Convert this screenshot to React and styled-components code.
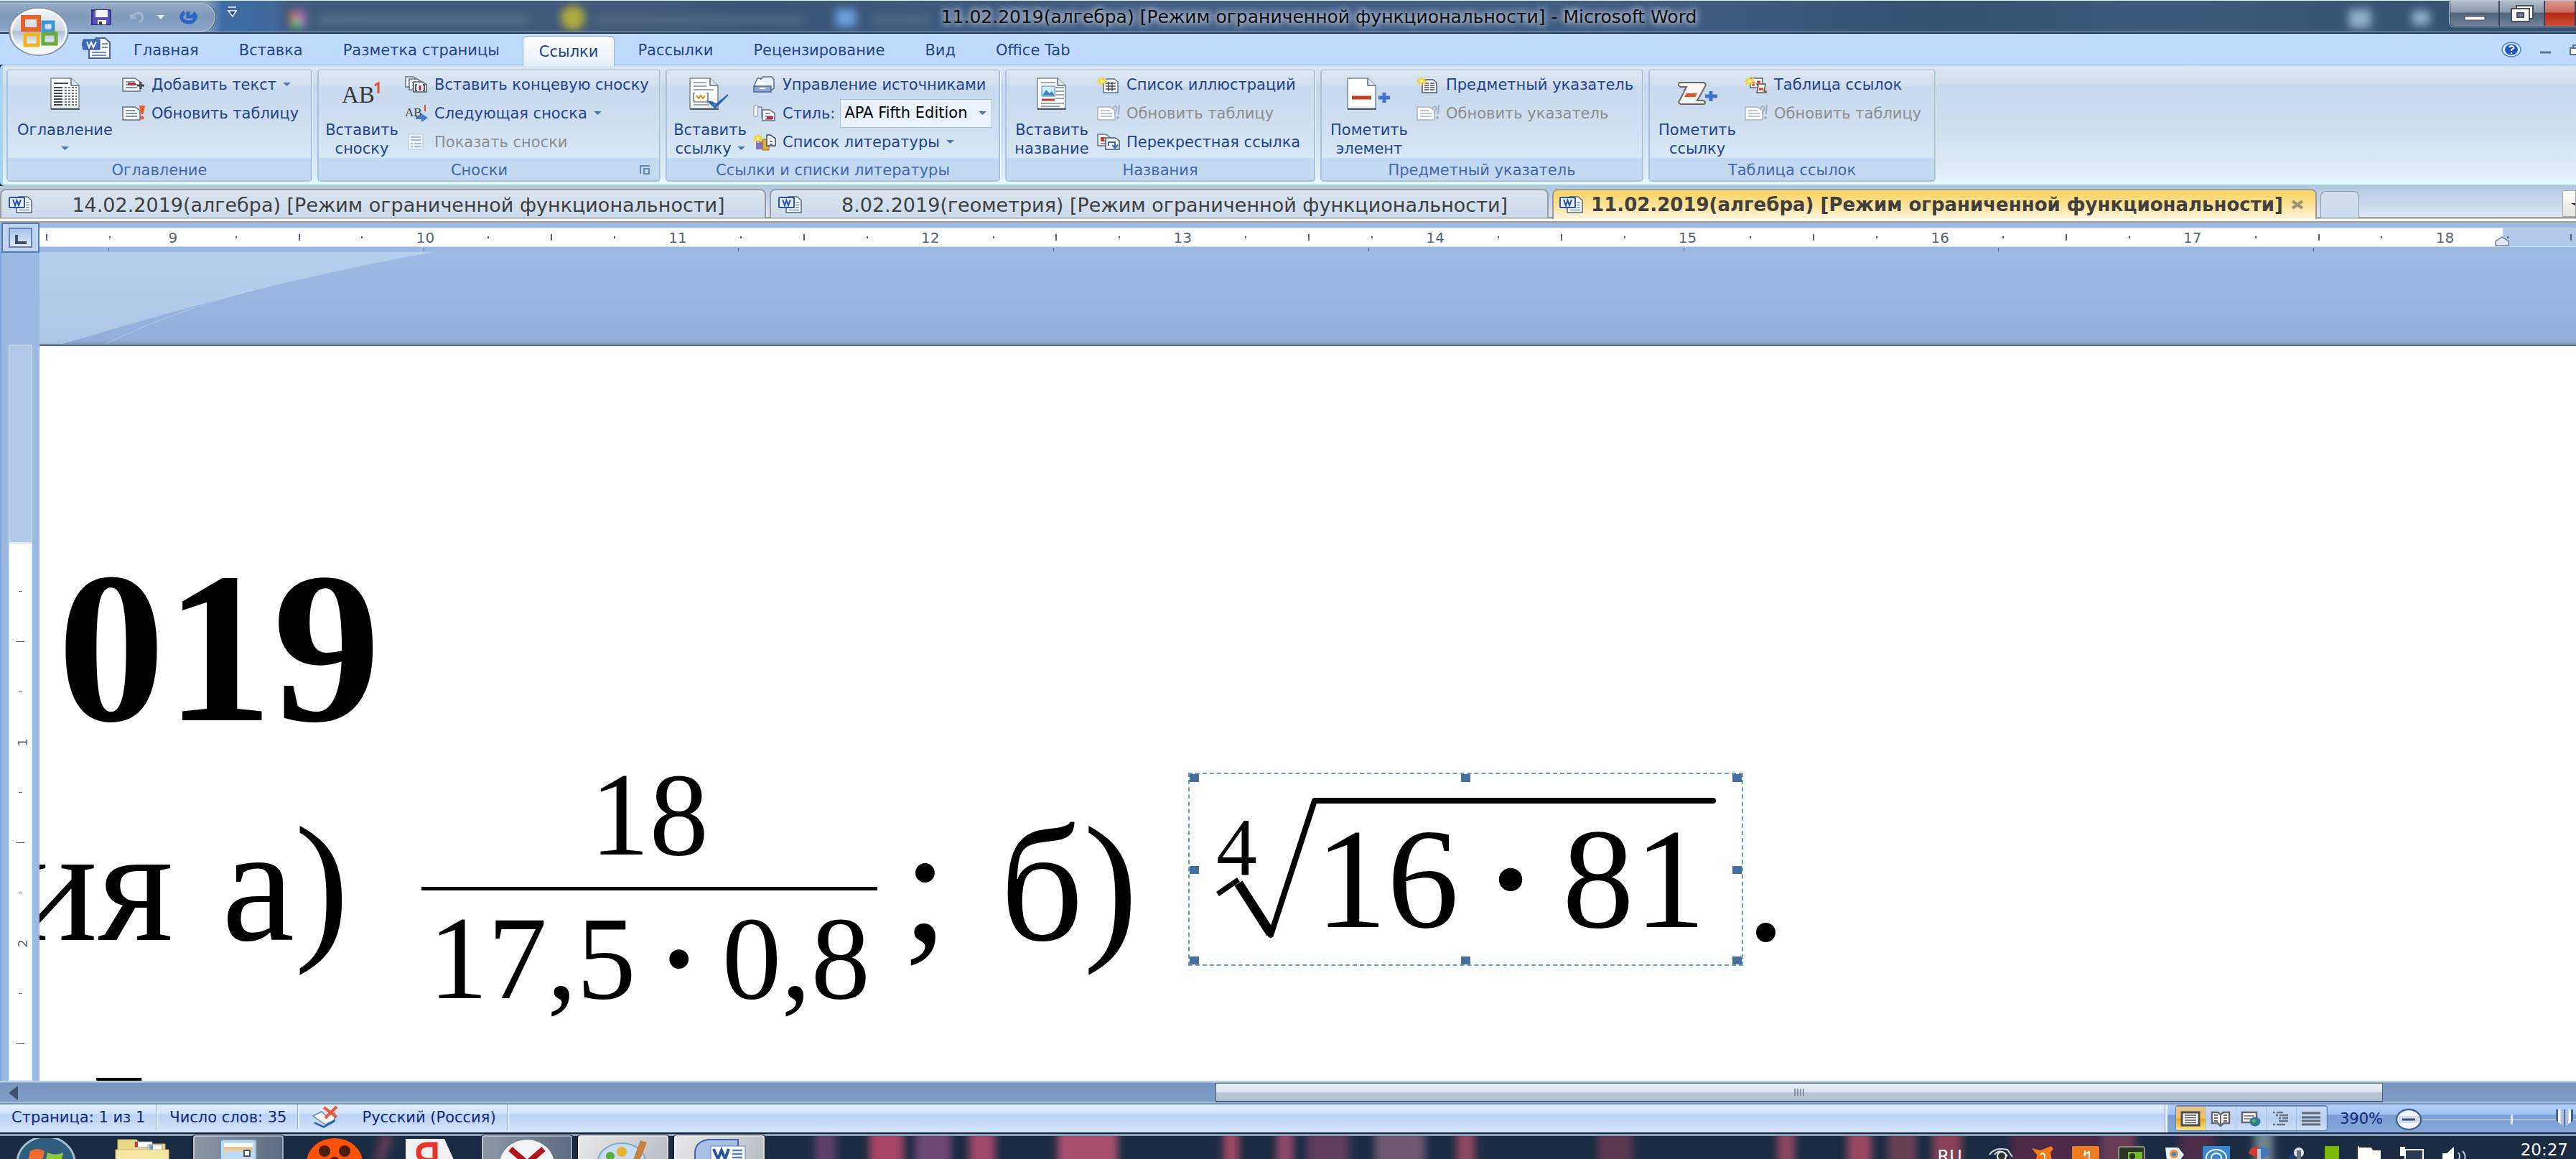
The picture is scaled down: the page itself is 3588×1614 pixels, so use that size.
import React from "react";
import styled, { createGlobalStyle, css } from "styled-components";

const ui = `"DejaVu Sans", "Noto Sans", sans-serif`;
const serif = `"Liberation Serif", serif`;

const Global = createGlobalStyle`
  * { box-sizing: border-box; }
  body { margin: 0; background: #1b2b42; font-family: ${ui}; }
  button, select, input { font: inherit; color: inherit; }
  button { border: 0; padding: 0; background: none; white-space: nowrap; }
  svg { display: block; flex: none; }
`;

const Shell = styled.div`
  height: 100vh;
  display: flex;
  flex-direction: column;
  overflow: hidden;
  position: relative;
`;

/* ---------- title bar ---------- */
const TitleBar = styled.header`
  height: 47px;
  flex: none;
  display: flex;
  position: relative;
  border-top: 1px solid #dff2f4;
  border-bottom: 2px solid #1d3150;
  box-shadow: inset 0 -1px 0 #9db4d0;
  background: linear-gradient(90deg, #7f9cbd 0, #7d9abb 290px, #3d6da6 310px, #41699c 380px, #405a7c 400px, #42597a 900px, #3a5578 1050px, #435f86 1700px, #3f5b80 2400px, #355273 2700px, #3f5a7c 3000px, #34506f 100%);
`;
const QuickAccess = styled.div`
  width: 300px;
  height: 40px;
  margin-top: 3px;
  padding-left: 127px;
  display: flex;
  align-items: center;
  border: 1px solid #b4c6db;
  border-left: 0;
  border-radius: 0 20px 20px 0;
  background: linear-gradient(#93a9c4, #7f9abb 50%, #8ba6c8);
  box-shadow: 1px 0 0 #40566f;
`;
const Quick = styled.button`
  width: ${(p) => p.$w}px;
  height: 32px;
  display: flex;
  align-items: center;
`;
const Ghosts = styled.div`
  position: absolute;
  inset: 0;
  pointer-events: none;
`;
const WindowTitle = styled.h1`
  margin: 0;
  position: absolute;
  inset: 0;
  left: 86px;
  text-align: center;
  font-size: 25px;
  line-height: 46px;
  font-weight: 400;
  color: #0b0f16;
  text-shadow: 0 0 8px #ffffffb0, 0 0 10px #ffffff90, 0 0 14px #ffffff80;
`;
const WindowButtons = styled.div`
  display: flex;
  position: relative;
  margin-left: auto;
  height: 36px;
  border: 1px solid #26394f;
  border-top: 0;
  border-right: 0;
  border-radius: 0 0 0 6px;
  box-shadow: 0 0 0 1px #b8c6d6;
  overflow: hidden;
`;
const WinButton = styled.button`
  width: ${(p) => p.$w}px;
  display: flex;
  align-items: center;
  justify-content: center;
  border-right: 2px solid #33465d;
  background: ${(p) =>
    p.$close
      ? "linear-gradient(#dc9a90, #cc6a5c 45%, #b52a17 50%, #cf4a33)"
      : "linear-gradient(#b5c0cd, #8896a8 45%, #52647b 50%, #70839b)"};
`;
const Orb = styled.button`
  position: absolute;
  left: 11px;
  top: 9px;
  width: 86px;
  height: 70px;
  z-index: 2;
`;

/* ---------- ribbon ---------- */
const TabStrip = styled.nav`
  height: 43px;
  flex: none;
  display: flex;
  align-items: stretch;
  background: #bfdbff;
  padding: 3px 0 0 112px;
  font-size: 21px;
  color: #1f448e;
`;
const TabIcon = styled.span`
  width: 46px;
  padding-top: 2px;
`;
const RibbonTab = styled.button`
  padding: 0 28px;
  line-height: 40px;
  ${(p) =>
    p.$active &&
    css`
      background: linear-gradient(#fdfeff, #e6eff9);
      border: 1px solid #8cb0dc;
      border-bottom: 0;
      border-radius: 6px 6px 0 0;
      position: relative;
      margin: 0 4px -2px;
      padding: 0 22px;
    `}
`;
const StripTools = styled.div`
  margin-left: auto;
  display: flex;
  align-items: center;
  gap: 26px;
  padding-bottom: 2px;
`;
const Ribbon = styled.section`
  height: 169px;
  flex: none;
  display: flex;
  gap: 7px;
  padding: 5px 9px 4px 5px;
  border: 1px solid #8db2e3;
  border-left: 4px solid #a9d3f2;
  border-right: 0;
  border-bottom: 2px solid #9dd0e8;
  border-radius: 6px 0 0 6px;
  background: linear-gradient(#dbe6f3 0, #d2dfee 26px, #c8d8ed 27px, #d0dfee 90px, #dfedfa 150px, #e4fbff 100%);
`;
const Group = styled.div`
  width: ${(p) => p.$w}px;
  display: flex;
  flex-direction: column;
  border: 2px solid #a9c3de;
  border-top-color: #c3d0df;
  border-radius: 5px;
  box-shadow: 1px 1px 0 #f2f9ff;
  overflow: hidden;
  font-size: 21px;
  color: #1f448e;
`;
const GroupBody = styled.div`
  flex: 1;
  display: flex;
  background: linear-gradient(#dde7f3 0, #d2dfef 22px, #c8d8ed 23px, #cfdff0 70px, #d9e8f6 100%);
`;
const GroupTitle = styled.div`
  height: 31px;
  line-height: 30px;
  padding: 2px ${(p) => (p.$launch ? 12 : 0)}px 0 0;
  display: flex;
  align-items: center;
  background: #c2d9f1;
  color: #3e6aaa;
  span { flex: 1; text-align: center; }
`;
const Big = styled.button`
  width: ${(p) => p.$w}px;
  display: flex;
  flex-direction: column;
  align-items: center;
  padding-top: 10px;
  line-height: 26px;
  > svg:first-child { margin-bottom: 14px; }
`;
const BigLine = styled.span`
  height: 26px;
  display: flex;
  align-items: center;
  gap: 8px;
`;
const Rows = styled.div`
  display: flex;
  flex-direction: column;
`;
const Cmd = styled.button`
  height: 40px;
  display: flex;
  align-items: center;
  gap: 9px;
  color: ${(p) => (p.disabled ? "#8d8d8d" : "inherit")};
`;
const StyleRow = styled.div`
  height: 40px;
  display: flex;
  align-items: center;
  label { margin: 0 7px 0 9px; }
`;
const SelectWrap = styled.div`
  position: relative;
  svg { position: absolute; right: 8px; top: 17px; pointer-events: none; }
`;
const Select = styled.select`
  appearance: none;
  width: 212px;
  height: 40px;
  padding: 0 0 2px 5px;
  border: 1px solid #abc1de;
  border-radius: 0;
  background: #eaf2fb;
  color: #000;
`;

/* ---------- document tabs ---------- */
const DocTabs = styled.div`
  height: 51px;
  flex: none;
  display: flex;
  align-items: flex-end;
  padding-bottom: 5px;
  gap: 5px;
  border-bottom: 2px solid #a2a090;
  background: linear-gradient(#b3c7e2, #dde6f4 43px, #9c9d9b 43px, #9c9d9b 45px, #fff 46px);
`;
const DocTab = styled.button`
  width: ${(p) => p.$w}px;
  height: 40px;
  display: flex;
  align-items: center;
  padding: 2px 0 0 10px;
  font-size: ${(p) => (p.$active ? 26 : 27)}px;
  color: #3f3f3f;
  border: 2px solid #9a9c9c;
  border-bottom: 0;
  border-radius: 8px 8px 0 0;
  background: linear-gradient(#dce5ef, #ccdaec);
  > span { flex: 1; text-align: center; }
  ${(p) =>
    p.$active &&
    css`
      height: 42px;
      margin-bottom: -2px;
      padding: 0 16px 0 8px;
      font-weight: 700;
      background: linear-gradient(#fcd463, #fde39a 55%, #fff6df);
    `}
`;
const NewTab = styled.button`
  width: 54px;
  height: 37px;
  border: 1px solid #8c97a5;
  border-bottom: 0;
  border-radius: 8px 8px 0 0;
  background: linear-gradient(#d3deec, #cbdcec);
`;
const TabMenu = styled.button`
  margin-left: auto;
  align-self: flex-start;
  margin-top: 6px;
  width: 19px;
  height: 37px;
  border: 1px solid #a9a9a9;
  background: linear-gradient(#fff, #e3e3e0);
  display: flex;
  align-items: center;
  justify-content: flex-end;
`;

/* ---------- rulers ---------- */
const RulerRow = styled.div`
  height: 41px;
  flex: none;
  display: flex;
  background: #9bb9e1;
`;
const Corner = styled.button`
  width: 53px;
  margin-left: 2px;
  height: 42px;
  padding: 5px 8px 7px;
  border: 2px solid #4f7ac0;
  background: #c1d5f0;
  flex: none;
  position: relative;
`;
const CornerFace = styled.span`
  display: flex;
  justify-content: center;
  align-items: flex-end;
  height: 28px;
  padding-bottom: 3px;
  border: 2px solid #6284bb;
  background: linear-gradient(#a8c2e8, #e2ecf8);
`;
const RulerBody = styled.div`
  flex: 1;
  min-width: 0;
  overflow: hidden;
  padding-top: 8px;
`;
const Scale = styled.div`
  height: 25px;
  display: flex;
  position: relative;
  background: linear-gradient(90deg, #fff calc(100% - 102px), #b1c8ea calc(100% - 102px));
  box-shadow: 0 -1px 0 #cfdff3, 0 1px 0 #cfdff3;
`;
const Ticks = styled.div`
  flex: 1;
  display: flex;
  margin: 0 -37px 0 -34px;
`;
const Tick = styled.span`
  flex: 1 1 0;
  display: flex;
  align-items: center;
  justify-content: center;
  font-size: 20px;
  line-height: 24px;
  color: #59636f;
  &::before {
    content: "";
    width: ${(p) => (p.$kind === "num" ? 0 : 2)}px;
    height: ${(p) => (p.$kind === "half" ? 9 : 3)}px;
    background: #59636f;
  }
`;
const Indent = styled.span`
  position: absolute;
  right: 92px;
  bottom: 0;
`;
const Stops = styled.div`
  display: flex;
  height: 8px;
  padding: 2px 146px 2px 0;
  margin-left: -123px;
  i { flex: 1; display: flex; justify-content: center; }
  i::before { content: ""; width: 1px; height: 5px; background: #53657e; }
`;
const Work = styled.main`
  flex: 1;
  min-height: 0;
  display: flex;
  background: #9bb9e1;
`;
const SideRuler = styled.div`
  width: 55px;
  flex: none;
  padding: 129px 10px 0;
  display: flex;
  flex-direction: column;
  border-left: 2px solid #7da3d8;
`;
const SideMargin = styled.div`
  height: 276px;
  flex: none;
  border: 1px solid #dbe7f6;
  background: #b1c8ea;
`;
const SideScale = styled.div`
  flex: 1;
  display: flex;
  flex-direction: column;
  padding: 31px 0 15px;
  background: #fff;
  border: 1px solid #dbe7f6;
`;
const SideTick = styled.span`
  flex: 1;
  display: flex;
  align-items: center;
  justify-content: center;
  font-size: 18px;
  color: #59636f;
  &::before {
    content: "";
    height: ${(p) => (p.$kind === "num" ? 0 : 1)}px;
    width: ${(p) => (p.$kind === "half" ? 11 : 5)}px;
    background: #59636f;
  }
  b { font-weight: 400; writing-mode: vertical-rl; transform: rotate(180deg); }
`;

/* ---------- document ---------- */
const Desk = styled.div`
  flex: 1;
  min-width: 0;
  display: flex;
  flex-direction: column;
`;
const Backdrop = styled.div`
  height: 129px;
  flex: none;
  background: linear-gradient(#9dbce5, #91aedb 95%, #7f97bb);
`;
const Page = styled.article`
  flex: 1;
  min-height: 0;
  overflow: hidden;
  border-top: 2px solid #5f6a78;
  padding-top: 290px;
  background: #fff;
  color: #000;
  font-family: ${serif};
  white-space: nowrap;
`;
const DateLine = styled.h2`
  margin: 0;
  padding-left: 25px;
  font-size: 300px;
  line-height: 260px;
  font-weight: 700;
`;
const Line = styled.div`
  margin-top: 8px;
  display: grid;
  grid-template-columns: 254px 278px 635px 171px 262px 776px auto;
  align-items: start;
  height: 418px;
`;
const Run = styled.span`
  margin-top: 78px;
  font-size: 228px;
  line-height: 228px;
  display: flex;
  justify-content: ${(p) => (p.$end ? "flex-end" : "flex-start")};
  padding-right: ${(p) => (p.$end ? 68 : 0)}px;
  padding-left: ${(p) => p.$indent || 0}px;
`;
const Fraction = styled.div`
  font-size: 165px;
  line-height: 190px;
`;
const Part = styled.div`
  display: flex;
  justify-content: center;
`;
const Bar = styled.div`
  height: 5px;
  margin-top: 5px;
  background: #000;
`;
const Times = styled.b`
  width: ${(p) => p.$w}px;
  text-align: center;
`;
const Radical = styled.div`
  position: relative;
  margin-top: 36px;
  width: 773px;
  height: 269px;
  padding: 46px 0 0 37px;
  border: 2px dashed #6f9bc4;
  display: flex;
  font-size: 200px;
  line-height: 200px;
`;
const Degree = styled.span`
  width: 138px;
  font-size: 114px;
  line-height: 114px;
`;
const RootSign = styled.svg`
  position: absolute;
  inset: 0;
`;
const Handle = styled.span`
  position: absolute;
  width: 13px;
  height: 11px;
  background: #456f9e;
  left: ${(p) => ["0", "calc(50% - 7px)", "calc(100% - 13px)"][p.$x]};
  top: ${(p) => ["0", "calc(50% - 5px)", "calc(100% - 11px)"][p.$y]};
`;
const NextLine = styled.p`
  margin: 0;
  padding-left: 64px;
  font-size: 190px;
  line-height: 208px;
`;

/* ---------- bottom bars ---------- */
const HScroll = styled.div`
  height: 33px;
  flex: none;
  display: flex;
  align-items: center;
  padding: 0 269px 0 12px;
  background: linear-gradient(#b5cfe8 0, #b5cfe8 2px, #7896c0 3px, #7f9dc6 29px, #bcd3ee 30px, #4a6794 33px);
`;
const Thumb = styled.div`
  margin-left: auto;
  width: 1626px;
  height: 27px;
  display: flex;
  align-items: center;
  justify-content: center;
  gap: 2px;
  border: 1px solid #4c5f83;
  border-bottom-width: 2px;
  background: linear-gradient(#eaeff5, #dde4ed 50%, #bdc9da 52%, #b0bed1);
  i { width: 2px; height: 10px; background: #8592a6; }
`;
const Status = styled.footer`
  height: 41px;
  flex: none;
  display: flex;
  font-size: 21px;
  line-height: 41px;
  color: #15287a;
  border-bottom: 2px solid #14233b;
  background: linear-gradient(#e2f0ff 0, #cfe1fb 13px, #b9d2f6 14px, #c9dcf9 28px, #d8e8ff 100%);
`;
const Stat = styled.button`
  padding: 0 16px;
  border-right: 2px solid #e9f4ff;
  box-shadow: inset -1px 0 0 #8fb0dd;
  height: 35px;
  line-height: 38px;
  display: flex;
  align-items: center;
  gap: 29px;
`;
const ViewArea = styled.div`
  margin-left: auto;
  display: flex;
  padding-left: 11px;
  border-left: 3px solid #eaf4ff;
  box-shadow: -1px 0 0 #7d9fce;
  background: linear-gradient(#b4d2ff 0, #9fc2f3 14px, #7a9fd6 15px, #86a8d8 100%);
`;
const Views = styled.div`
  display: flex;
  height: 36px;
  margin-top: 1px;
  border: 1px solid #5e84bb;
  border-top-width: 2px;
  border-radius: 4px;
  overflow: hidden;
  background: linear-gradient(#c7dcf8, #b7cff2 50%, #cfe0f8);
`;
const View = styled.button`
  width: 42px;
  display: flex;
  align-items: center;
  justify-content: center;
  border-right: 1px solid #a3c0e6;
  background: ${(p) => (p.$on ? "linear-gradient(#e6bf8c, #f4c160 48%, #e9a820 52%, #fbe38e)" : "none")};
`;
const ZoomValue = styled.button`
  padding: 0 17px;
`;
const ZoomOut = styled.button`
  width: 38px;
`;
const Slider = styled.input`
  appearance: none;
  width: 214px;
  height: 38px;
  margin: 0;
  background:
    linear-gradient(#dceaff, #dceaff) 0 21px / 100% 1px no-repeat,
    linear-gradient(#dceaff, #dceaff) 123px 14px / 3px 14px no-repeat;
  &::-webkit-slider-thumb {
    appearance: none;
    width: 24px;
    height: 25px;
    clip-path: polygon(0 0, 100% 0, 100% 62%, 50% 100%, 0 62%);
    background: linear-gradient(90deg, #3f5f90 3px, #fff 3px, #fff 6px, #a9bfdf 7px, #a9bfdf 11px, #54719d 11px, #54719d 13px, #a9bfdf 13px, #a9bfdf 17px, #fff 18px, #fff 21px, #3f5f90 21px);
  }
`;
const Taskbar = styled.div`
  height: 35px;
  flex: none;
  position: relative;
  display: flex;
  overflow: hidden;
  background: #1b2b42;
`;
const Wallpaper = styled.svg`
  position: absolute;
  inset: 0;
`;
const TaskButton = styled.button`
  position: relative;
  height: 50px;
  width: 128px;
  margin-top: 1px;
  display: flex;
  justify-content: center;
  padding-top: 5px;
  ${(p) =>
    p.$open &&
    css`
      border: 1px solid #0d1826;
      box-shadow: inset 0 0 0 2px #ffffff70;
      border-radius: 4px;
      background: ${p.$light ? "linear-gradient(120deg, #e9e9ea, #b6bac2)" : "linear-gradient(90deg, #8d98a6, #5c6b7f)"};
    `}
`;
const Launcher = styled.div`
  position: relative;
  display: flex;
  gap: 6px;
`;
const Tray = styled.div`
  position: relative;
  margin-left: auto;
  display: flex;
  gap: 26px;
  padding-right: 11px;
  color: #fff;
  > svg { margin-top: 17px; }
`;
const Lang = styled.button`
  font-size: 24px;
  line-height: 28px;
  height: 46px;
  padding-top: 17px;
  margin-right: 11px;
`;
const Clock = styled.time`
  font-size: 23px;
  line-height: 24px;
  padding-top: 10px;
  margin-left: 49px;
`;

/* ---------- drawings ---------- */
const Arrow = () => (
  <svg width="11" height="6" viewBox="0 0 11 6"><path d="M0 0h11L5.500 5z" fill="#4f74aa" /></svg>
);
const Svg = ({ w, h, children }) => (
  <svg width={w} height={h} viewBox={`0 0 ${w} ${h}`} aria-hidden="true">{children}</svg>
);
const WordDoc = () => (
  <Svg w={33} h={24}>
    <path d="M14 1h12l6 5v17H11V8z" fill="#fff" stroke="#4a648f" strokeWidth="1.500" />
    <path d="M15 19.500h14M24 9h5M24 12.500h5M24 16h5" stroke="#6e8fc8" strokeWidth="1.500" />
    <rect x="1" y="2" width="21" height="14" rx="1" fill="#e8effb" stroke="#2c57a4" strokeWidth="2" />
    <path d="M6 5l3 8 2.500-7 2.500 7 3-8" fill="none" stroke="#24509f" strokeWidth="2" />
  </Svg>
);
const Sheet = ({ x = 0, y = 0, w = 26, h = 20, tint = "#5b6f8a" }) => (
  <g>
    <path d={`M${x + 1} ${y + 1}h${w - 9}l7 5v${h - 7}h${-(w - 2)}z`} fill="#fff" stroke={tint} strokeWidth="1.500" />
    <path d={`M${x + 5} ${y + 6}h${w - 13}M${x + 5} ${y + 10}h${w - 10}M${x + 5} ${y + 14}h${w - 10}`} stroke={tint} strokeWidth="1.500" />
  </g>
);
const Star = ({ x = 7, y = 7 }) => (
  <g stroke="#f3d648" strokeWidth="2.500">
    <path d={`M${x - 7} ${y}h14M${x} ${y - 6}v12M${x - 5} ${y - 4}l10 8M${x + 5} ${y - 4}l-10 8`} />
    <circle cx={x} cy={y} r="2" fill="#fff6b0" stroke="none" />
  </g>
);
const BigSheet = ({ children }) => (
  <g>
    <path d="M1 1h28l11 10v32H1z" fill="#fff" stroke="#7a8797" strokeWidth="1.500" />
    <path d="M29 1v10h11" fill="#dfe8f2" stroke="#5b6878" strokeWidth="1.500" />
    <path d="M1 44h40" stroke="#56616f" strokeWidth="2" />
    {children}
  </g>
);

const small = {
  addText: <><Sheet y={2} /><path d="M8 11h11" stroke="#c8202c" strokeWidth="3" /><path d="M21 13h10M26 8v10" stroke="#444c58" strokeWidth="3" /></>,
  update: <><Sheet y={2} /><path d="M24 1l8 0-2.500 12h-3z" fill="#f05a28" /><circle cx="28" cy="18" r="2.500" fill="#f05a28" /></>,
  updateOff: <><Sheet y={2} tint="#a9b3c4" /><path d="M22 5q4-6 6 0l-4 7" stroke="#a9b3c4" fill="none" strokeWidth="2" /><path d="M30 0l2 0-1 13h-2z" fill="#a3aec0" /><circle cx="29" cy="18" r="2" fill="#a3aec0" /></>,
  endnote: <><Sheet w={20} h={16} /><Sheet x={5} y={3} w={20} h={17} /><path d="M12 8h12l6 4v10H12z" fill="#fff" stroke="#4d5a6b" strokeWidth="1.500" /><path d="M17 12h-2v8h2M25 12h2v8h-2" stroke="#222" fill="none" strokeWidth="1.500" /><path d="M21 13v7" stroke="#c01f30" strokeWidth="3" /></>,
  next: <><text x="0" y="16" fontFamily="Liberation Serif" fontSize="17" fill="#333">AB</text><path d="M28 0v9" stroke="#e2502e" strokeWidth="2" /><path d="M15 16h8v-4l9 6-9 6v-4h-8z" fill="#3c78cf" /></>,
  show: <><rect x="5" y="1" width="20" height="21" fill="#eef4fb" stroke="#b5c2d6" /><path d="M8 5h14M8 9h14M8 14h3M13 14h10M8 18h3M13 18h10" stroke="#8fa6ca" strokeWidth="1.500" /></>,
  sources: <><path d="M2 12L6 3h12v14H2z" fill="#fff" stroke="#5c6e8c" strokeWidth="1.500" /><path d="M10 5l4-4h12l3 4v12l-6 4" fill="#eef3fa" stroke="#5c6e8c" strokeWidth="1.500" /><path d="M1 14h24v8H1z" fill="#8ea9d6" stroke="#4d6798" strokeWidth="1.500" /><path d="M9 17h8" stroke="#fff" strokeWidth="2" /></>,
  style: <><path d="M1 1h5v15H1z" fill="#fff" stroke="#8b93a8" /><path d="M7 3h5v15l12 2" fill="#e8ebf3" stroke="#7c86a0" strokeWidth="1.500" /><Sheet x={12} y={6} w={19} h={17} /><path d="M19 16h9v4h-9z" fill="#c3313b" /></>,
  biblio: <><path d="M4 10h9v12H4z" fill="#8273c4" /><path d="M13 8h9v15h-9z" fill="#e0b13a" stroke="#8c6b17" /><Sheet x={18} y={1} w={14} h={17} tint="#3d4a5c" /><Star /></>,
  figures: <><path d="M9 4h15l5 4v15H9z" fill="#fff" stroke="#5b6f8a" strokeWidth="1.500" /><path d="M12 10h14M12 14h14M12 18h14M16 8v13M21 8v13" stroke="#3f4a5a" strokeWidth="1.500" /><Star /></>,
  cross: <><Sheet w={20} h={18} /><path d="M5 5h5v6H5z" fill="#d03a2a" /><path d="M12 6h13l6 4v12H12z" fill="#fff" stroke="#3f5475" strokeWidth="1.500" /><path d="M16 17v-5h9v7M21 16l4 4 4-4" stroke="#2f64c0" strokeWidth="2" fill="none" /></>,
  index: <><path d="M8 5h15l5 4v14H8z" fill="#fff" stroke="#46536a" strokeWidth="1.500" /><path d="M11 10h6M19 10h6M11 13h6M19 13h6M11 16h6M19 16h6M11 19h6M19 19h6" stroke="#3f4a5a" strokeWidth="1.500" /><Star /></>,
  authorities: <><path d="M8 3h17v13H8z" fill="#fff" stroke="#5d5d68" strokeWidth="1.500" /><path d="M10 8h4M17 8h5M10 12h4M17 12h5" stroke="#c33a30" strokeWidth="3" /><path d="M17 11h12l-2 10h3v2H17l2-9z" fill="#f4f1ec" stroke="#5b5550" strokeWidth="1.500" /><path d="M20 18h6" stroke="#c8472c" strokeWidth="3" /><Star /></>,
};
const Small = ({ name }) => <Svg w={32} h={24}>{small[name]}</Svg>;

const big = {
  toc: <BigSheet><path d="M5 8h20M5 14h12M5 18h12M5 22h12M5 26h12M5 30h12M5 34h12M5 38h12" stroke="#3c4653" strokeWidth="2" /><path d="M20 14h17M20 18h17M20 22h17M20 26h17M20 30h17M20 34h17M20 38h17" stroke="#6a7582" strokeWidth="2" strokeDasharray="3 2" /></BigSheet>,
  footnote: <><text x="0" y="35" fontFamily="Liberation Serif" fontSize="33" fill="#3a3a3a">AB</text><path d="M46 11l5-3v14" stroke="#e8512e" strokeWidth="3" fill="none" /></>,
  citation: <BigSheet><path d="M6 7h18M6 12h18M6 17h28M6 34h28M6 38h22" stroke="#9aa7b8" strokeWidth="2" /><path d="M8 22h-2v10h2M24 22h2v10h-2" stroke="#8b95a3" fill="none" strokeWidth="2" /><path d="M10 25l3 4 3-4 3 4 3-4" stroke="#e08a2a" fill="none" strokeWidth="2" /><path d="M26 33l10 9L54 24 38 37z" fill="#3b7fd6" stroke="#2a66b8" strokeWidth="2" /></BigSheet>,
  caption: <BigSheet><path d="M6 7h20M26 14h12M26 19h12M26 24h12M6 36h32M6 40h26M26 29h12" stroke="#9aa7b8" strokeWidth="2" /><rect x="7" y="12" width="18" height="14" fill="#cde9f8" stroke="#4a90c0" /><path d="M8 25l5-8 5 5 3-3 4 6z" fill="#3d86b9" /><path d="M7 31h18" stroke="#c23a2b" strokeWidth="3" /></BigSheet>,
  entry: <BigSheet><path d="M7 28h27" stroke="#c1441f" strokeWidth="5" /><path d="M44 28h16M52 21v14" stroke="#3e74cf" strokeWidth="5" /></BigSheet>,
  authority: <><path d="M4 7h34q5 2 1 7l-10 18h8q5 1 2 5H6q-5-2-1-6L14 13H6q-5-2-2-6z" fill="#f7f5f1" stroke="#6c6963" strokeWidth="2" /><path d="M14 22h15l-3 5H11z" fill="#d25a2c" /><path d="M40 26h17M48 19v14" stroke="#3e74cf" strokeWidth="5" /></>,
};
const bigW = { toc: 42, footnote: 56, citation: 58, caption: 42, entry: 62, authority: 58 };

const groups = [
  { title: "Оглавление", w: 426, bigW: 159, icon: "toc", lines: ["Оглавление", ""], drop: true, cmds: [["addText", "Добавить текст", 1], ["update", "Обновить таблицу"]] },
  { title: "Сноски", w: 478, bigW: 120, icon: "footnote", lines: ["Вставить", "сноску"], launch: true, cmds: [["endnote", "Вставить концевую сноску"], ["next", "Следующая сноска", 1], ["show", "Показать сноски", 0, 1]] },
  { title: "Ссылки и списки литературы", w: 466, bigW: 120, icon: "citation", lines: ["Вставить", "ссылку"], drop: true, cmds: [["sources", "Управление источниками"], ["style"], ["biblio", "Список литературы", 1]] },
  { title: "Названия", w: 432, bigW: 126, icon: "caption", lines: ["Вставить", "название"], cmds: [["figures", "Список иллюстраций"], ["updateOff", "Обновить таблицу", 0, 1], ["cross", "Перекрестная ссылка"]] },
  { title: "Предметный указатель", w: 450, bigW: 132, icon: "entry", lines: ["Пометить", "элемент"], cmds: [["index", "Предметный указатель"], ["updateOff", "Обновить указатель", 0, 1]] },
  { title: "Таблица ссылок", w: 400, bigW: 132, icon: "authority", lines: ["Пометить", "ссылку"], cmds: [["authorities", "Таблица ссылок"], ["updateOff", "Обновить таблицу", 0, 1]] },
];

const kinds = ["half", "dot", "num", "dot"];
const streaks = [
  [1150, 30, "#5d3f68"], [1235, 48, "#a84565"], [1300, 50, "#6d4a70"], [1368, 36, "#a04a68"], [1515, 84, "#a8506e"],
  [1715, 22, "#a34663"], [1790, 24, "#8f4866"], [1850, 60, "#5c3c5c"], [1950, 70, "#6f5872"], [2042, 26, "#8f4a60"],
  [2250, 50, "#5a3750"], [2488, 24, "#8f4560"], [2590, 34, "#984862"], [2650, 40, "#6b4154"], [2712, 40, "#8a4258"], [2860, 120, "#4d2b45"], [2950, 50, "#6b3a55"], [3060, 50, "#4b2d48"],
];

export default function App() {
  return (
    <Shell>
      <Global />
      <TitleBar>
        <Ghosts>
          <svg width="100%" height="44">
            <defs><filter id="soft" x="-50%" y="-50%" width="200%" height="200%"><feGaussianBlur stdDeviation="6" /></filter></defs>
            <g filter="url(#soft)">
              <rect x="404" y="14" width="10" height="22" fill="#d07050" /><rect x="414" y="14" width="12" height="22" fill="#b060c0" /><rect x="406" y="26" width="14" height="12" fill="#50c070" />
              <rect x="445" y="22" width="290" height="9" fill="#5d7491" />
              <circle cx="798" cy="24" r="17" fill="#b0ab3c" />
              <rect x="830" y="22" width="290" height="9" fill="#566d8a" />
              <rect x="1164" y="12" width="28" height="24" fill="#6aa0e0" />
              <rect x="1215" y="22" width="80" height="9" fill="#566d8a" />
              <rect x="3272" y="12" width="30" height="26" fill="#93aecb" /><rect x="3360" y="14" width="24" height="20" fill="#93aecb" />
            </g>
          </svg>
        </Ghosts>
        <QuickAccess>
          <Quick $w={52} aria-label="Сохранить"><Svg w={28} h={22}><path d="M1 1h26v20H1z" fill="#5a52b8" stroke="#38329a" strokeWidth="2" /><path d="M6 1h17v10H6z" fill="#f3f6fd" /><path d="M9 15h12v6H9z" fill="#fff" /><path d="M11 17h4v4h-4z" fill="#333" /></Svg></Quick>
          <Quick $w={39} aria-label="Отменить"><Svg w={24} h={18}><path d="M3 5l1 5h7M4 9q10-10 15-3 3 6-4 10" fill="none" stroke="#a3b4cb" strokeWidth="3" /></Svg></Quick>
          <Quick $w={32} aria-label="Список отмены"><Svg w={12} h={8}><path d="M1 1h10L6 7z" fill="#e8eef6" /></Svg></Quick>
          <Quick $w={30} aria-label="Повторить"><Svg w={26} h={20}><path d="M7 3C-2 10 5 17 13 17s13-8 6-13M12 2v7h8" fill="none" stroke="#2d66c6" strokeWidth="5" /></Svg></Quick>
        </QuickAccess>
        <Quick $w={46} aria-label="Настройка панели быстрого доступа"><Svg w={46} h={20}><path d="M18 3h11M18 8h11l-5 8z" fill="#1d4285" stroke="#fff" strokeWidth="1.500" /></Svg></Quick>
        <WindowTitle>11.02.2019(алгебра) [Режим ограниченной функциональности] - Microsoft Word</WindowTitle>
        <WindowButtons>
          <WinButton $w={69} aria-label="Свернуть"><Svg w={30} h={20}><path d="M1 14h28v5H1z" fill="#fff" stroke="#48505a" /></Svg></WinButton>
          <WinButton $w={63} aria-label="Восстановить"><Svg w={34} h={26}><path d="M9 2h23v18H9z" fill="#fff" stroke="#48505a" strokeWidth="2" /><path d="M2 6h25v18H2z" fill="#fff" stroke="#48505a" strokeWidth="2" /><path d="M10 12h9v6h-9z" fill="#6f7f93" stroke="#48505a" strokeWidth="2" /></Svg></WinButton>
          <WinButton $w={43} $close aria-label="Закрыть" />
        </WindowButtons>
      </TitleBar>
      <Orb aria-label="Кнопка Office">
        <Svg w={86} h={70}>
          <defs><linearGradient id="orb" x1="0" y1="0" x2="0" y2="1"><stop offset="0" stopColor="#f4f7fb" /><stop offset=".47" stopColor="#d2dae6" /><stop offset=".5" stopColor="#aebfd6" /><stop offset=".8" stopColor="#eff4fa" /><stop offset="1" stopColor="#fff" /></linearGradient></defs>
          <ellipse cx="43" cy="35" rx="41" ry="33" fill="url(#orb)" stroke="#8597b0" strokeWidth="2" />
          <ellipse cx="43" cy="35" rx="38" ry="31" fill="none" stroke="#fff" strokeWidth="2" />
          <g fill="none">
            <path d="M21 15h22v17H21z" stroke="#e8622a" strokeWidth="6" />
            <path d="M49 22h14v12H49z" stroke="#3f97cf" strokeWidth="5" />
            <path d="M24 39h18v15H24z" stroke="#f3b51f" strokeWidth="5" />
            <path d="M49 38h18v14H49z" stroke="#6aaa3e" strokeWidth="5" />
          </g>
        </Svg>
      </Orb>
      <TabStrip>
        <TabIcon>
          <Svg w={42} h={31}>
            <path d="M22 1h12l7 6v22H12V12z" fill="#f7faff" stroke="#4a648f" strokeWidth="2" />
            <path d="M30 9h8M30 14h8M16 21h20M16 25h20" stroke="#6e8fc8" strokeWidth="2" />
            <path d="M4 3h23v14H4q-3-8 0-14z" fill="#3c68bf" stroke="#24509f" />
            <path d="M9 6l3 8 3-7 3 7 4-8" fill="none" stroke="#fff" strokeWidth="2" />
          </Svg>
        </TabIcon>
        {["Главная", "Вставка", "Разметка страницы", "Ссылки", "Рассылки", "Рецензирование", "Вид", "Office Tab"].map((t) => (
          <RibbonTab key={t} $active={t === "Ссылки"}>{t}</RibbonTab>
        ))}
        <StripTools>
          <button aria-label="Справка"><Svg w={28} h={22}><ellipse cx="14" cy="11" rx="13" ry="10" fill="#d8e8fb" stroke="#4d86cf" strokeWidth="1.500" /><ellipse cx="14" cy="11" rx="9" ry="7.500" fill="#1f58c4" /><path d="M10.500 8q3.500-4 7 0 0 2-3.500 3v2M14 15v2" stroke="#fff" strokeWidth="2" fill="none" /></Svg></button>
          <button aria-label="Свернуть документ"><Svg w={15} h={16}><path d="M0 12h15" stroke="#5b7497" strokeWidth="3" /></Svg></button>
          <button aria-label="Восстановить документ"><Svg w={9} h={16}><path d="M1 6h12v9H1z" fill="#fff" stroke="#5b6f8c" strokeWidth="2" /><path d="M5 5V2h8" stroke="#5b6f8c" strokeWidth="2" fill="none" /></Svg></button>
        </StripTools>
      </TabStrip>
      <Ribbon>
        {groups.map((g) => (
          <Group key={g.title} $w={g.w}>
            <GroupBody>
              <Big $w={g.bigW}>
                <Svg w={bigW[g.icon]} h={46}>{big[g.icon]}</Svg>
                <BigLine>{g.lines[0]}</BigLine>
                <BigLine>{g.lines[1]}{g.drop && <Arrow />}</BigLine>
              </Big>
              <Rows>
                {g.cmds.map(([icon, label, drop, off]) =>
                  icon === "style" ? (
                    <StyleRow key={icon}>
                      <Small name="style" />
                      <label htmlFor="bib-style">Стиль:</label>
                      <SelectWrap>
                        <Select id="bib-style"><option>APA Fifth Edition</option></Select>
                        <Arrow />
                      </SelectWrap>
                    </StyleRow>
                  ) : (
                    <Cmd key={label} disabled={!!off}><Small name={icon} />{label}{!!drop && <Arrow />}</Cmd>
                  )
                )}
              </Rows>
            </GroupBody>
            <GroupTitle $launch={g.launch}>
              <span>{g.title}</span>
              {g.launch && <button aria-label="Параметры сносок"><Svg w={15} h={13}><path d="M1 12V1h13M6 5h7v7H6z" fill="none" stroke="#6789ae" strokeWidth="2" /></Svg></button>}
            </GroupTitle>
          </Group>
        ))}
      </Ribbon>
      <DocTabs>
        <DocTab $w={1067}><WordDoc /><span>14.02.2019(алгебра) [Режим ограниченной функциональности]</span></DocTab>
        <DocTab $w={1085}><WordDoc /><span>8.02.2019(геометрия) [Режим ограниченной функциональности]</span></DocTab>
        <DocTab $w={1065} $active><WordDoc /><span>11.02.2019(алгебра) [Режим ограниченной функциональности]</span><Svg w={18} h={12}><path d="M2 1l14 10M16 1L2 11" stroke="#9c9275" strokeWidth="4" /></Svg></DocTab>
        <NewTab aria-label="Новая вкладка" />
        <TabMenu aria-label="Список вкладок"><Svg w={6} h={6}><path d="M0 2h6v3z" fill="#111" /></Svg></TabMenu>
      </DocTabs>
      <RulerRow>
        <Corner aria-label="Тип табуляции"><CornerFace><Svg w={16} h={13}><path d="M2 0v11h14" fill="none" stroke="#3f4f66" strokeWidth="4" /></Svg></CornerFace></Corner>
        <RulerBody>
          <Scale>
            <Ticks>
              {Array.from({ length: 41 }, (_, i) => (
                <Tick key={i} $kind={kinds[i % 4]}>{i % 4 === 2 ? 9 + (i - 2) / 4 : null}</Tick>
              ))}
            </Ticks>
            <Indent><Svg w={22} h={14}><path d="M11 1l9 6v6H2V7z" fill="#dfe8f4" stroke="#6a7f9c" strokeWidth="1.500" /></Svg></Indent>
          </Scale>
          <Stops>{Array.from({ length: 8 }, (_, i) => <i key={i} />)}</Stops>
        </RulerBody>
      </RulerRow>
      <Work>
        <SideRuler>
          <SideMargin />
          <SideScale>
            {Array.from({ length: 10 }, (_, i) => (
              <SideTick key={i} $kind={["dot", "half", "dot", "num"][i % 4]}>{i % 4 === 3 && <b>{(i + 1) / 4}</b>}</SideTick>
            ))}
          </SideScale>
        </SideRuler>
        <Desk>
          <Backdrop>
            <Svg w={560} h={129}>
              <path d="M0 0H548Q300 45 30 128H0z" fill="#dcebfa" opacity=".4" />
              <path d="M300 52Q180 85 92 128M300 52Q200 78 30 128" fill="none" stroke="#c3d8f1" opacity=".6" />
            </Svg>
          </Backdrop>
          <Page>
            <DateLine>019</DateLine>
            <Line>
              <Run $end>ия</Run>
              <Run>а)</Run>
              <Fraction>
                <Part>18</Part>
                <Bar />
                <Part>17,5<Times $w={120}>·</Times>0,8</Part>
              </Fraction>
              <Run $indent={35}>;</Run>
              <Run>б)</Run>
              <Radical>
                <RootSign width="769" height="265" viewBox="0 0 769 265" fill="none" stroke="#000">
                  <path d="M39 167L68 147" strokeWidth="7" />
                  <path d="M68 152L113 222" strokeWidth="13" />
                  <path d="M113 224L174 37H729" strokeWidth="8" strokeLinejoin="round" strokeLinecap="round" />
                </RootSign>
                <Degree>4</Degree>
                <span>16</span><Times $w={144}>·</Times><span>81</span>
                {[[0, 0], [1, 0], [2, 0], [0, 1], [2, 1], [0, 2], [1, 2], [2, 2]].map(([x, y]) => <Handle key={`${x}${y}`} $x={x} $y={y} />)}
              </Radical>
              <Run>.</Run>
            </Line>
            <NextLine>5</NextLine>
          </Page>
        </Desk>
      </Work>
      <HScroll>
        <button aria-label="Прокрутить влево"><Svg w={14} h={20}><path d="M13 0v20L0 10z" fill="#40506d" /></Svg></button>
        <Thumb><i /><i /><i /><i /></Thumb>
      </HScroll>
      <Status>
        <Stat>Страница: 1 из 1</Stat>
        <Stat>Число слов: 35</Stat>
        <Stat>
          <Svg w={42} h={32}><path d="M3 14l12-6 6 6 12-4v10L20 26z" fill="#f4f8ff" stroke="#7487a8" strokeWidth="1.500" /><path d="M5 22l13 6 16-10v4L18 31 5 25z" fill="#2f62b8" /><path d="M18 2l18 14M36 1L20 17" stroke="#ee5a34" strokeWidth="4" /></Svg>
          Русский (Россия)
        </Stat>
        <ViewArea>
          <Views>
            <View $on aria-label="Разметка страницы"><Svg w={28} h={22}><path d="M2 2h24v18H2z" fill="#fff" stroke="#4b4b4b" strokeWidth="3" /><path d="M6 6h16M6 9.500h16M6 13h16M6 16.500h16" stroke="#555" strokeWidth="1.500" /></Svg></View>
            <View aria-label="Режим чтения"><Svg w={28} h={22}><path d="M2 2h8l4 3 4-3h8v15h-8l-4 4-4-4H2z" fill="#fff" stroke="#666" strokeWidth="2.500" /><path d="M5 6h5M5 10h5M5 14h5M18 6h5M18 10h5M18 14h5M14 5v15" stroke="#666" strokeWidth="2" /></Svg></View>
            <View aria-label="Веб-документ"><Svg w={28} h={22}><path d="M2 2h20v14H2z" fill="#fff" stroke="#666" strokeWidth="2.500" /><path d="M5 7h14M5 11h12" stroke="#666" strokeWidth="1.500" /><ellipse cx="20" cy="15" rx="7.500" ry="6.500" fill="#2f7b96" /><path d="M15 13l5-2 2 3-4 3z" fill="#58b06c" /></Svg></View>
            <View aria-label="Структура"><Svg w={22} h={20}><path d="M0 1h3M5 1h9M4 5h3M9 5h12M8 9h3M13 9h8M8 13h13M0 18h3M5 18h12" stroke="#6d7480" strokeWidth="2.500" /></Svg></View>
            <View aria-label="Черновик"><Svg w={26} h={20}><path d="M0 2h26M0 8h26M0 13h26M0 18h26" stroke="#626974" strokeWidth="3" /></Svg></View>
          </Views>
          <ZoomValue>390%</ZoomValue>
          <ZoomOut aria-label="Уменьшить"><Svg w={38} h={32}><ellipse cx="19" cy="17" rx="17" ry="14" fill="#f3f7fc" stroke="#47638e" strokeWidth="2.500" /><path d="M5 17h28" stroke="#b9cbe4" strokeWidth="10" opacity=".6" /><path d="M10 17h18" stroke="#3c5276" strokeWidth="3" /></Svg></ZoomOut>
          <Slider type="range" min="0" max="100" defaultValue="98" aria-label="Масштаб" />
        </ViewArea>
      </Status>
      <Taskbar>
        <Wallpaper width="100%" height="35">
          <g filter="url(#soft)">
            {streaks.map(([x, w, c]) => <rect key={x} x={x - w / 2} y="-10" width={w} height="60" fill={c} />)}
            <path d="M530 0l20 0-14 40h-16z" fill="#5b3a56" />
            <rect x="3140" y="-10" width="26" height="60" fill="#73848f" />
          </g>
          <rect width="100%" height="3" fill="#8ba0bb" />
        </Wallpaper>
        <Launcher>
          <TaskButton aria-label="Пуск">
            <Svg w={84} h={60}><ellipse cx="42" cy="34" rx="40" ry="36" fill="#2f5f7c" stroke="#9fc0d0" strokeWidth="3" /><path d="M20 18q10-6 20 0l-3 14q-10-4-20 0z" fill="#ee6a2e" /><path d="M44 20q12 5 22 0l-3 14q-10 4-22 0z" fill="#8cc63e" /></Svg>
          </TaskButton>
          <TaskButton aria-label="Проводник">
            <Svg w={76} h={50}><path d="M4 2h26l6 6h34v40H4z" fill="#e9d88a" stroke="#c9ac4c" /><path d="M28 5h24v8H28zM46 9h20v8H46z" fill="#fff" stroke="#999" /><path d="M28 5h4v7h-4z" fill="#c83c2a" /><path d="M48 10h5v6h-5z" fill="#5a9bd0" /><path d="M1 16h74v34H1z" fill="#f5e6a4" stroke="#d8bf66" /></Svg>
          </TaskButton>
          <TaskButton $open aria-label="Окно">
            <Svg w={52} h={50}><rect x="1" y="1" width="50" height="48" rx="3" fill="#bcd9ef" stroke="#6e95b8" strokeWidth="2" /><path d="M6 6h40v5H6z" fill="#fff" /><path d="M6 11h40v6H6z" fill="#f0c894" /><path d="M34 16h8v8h-8z" fill="#fff" stroke="#456" strokeWidth="2" /></Svg>
          </TaskButton>
          <TaskButton aria-label="Браузер">
            <Svg w={80} h={50}><ellipse cx="40" cy="34" rx="39" ry="34" fill="#ff5108" /><ellipse cx="26" cy="18" rx="8" ry="8" fill="#4a1f10" /><ellipse cx="54" cy="18" rx="8" ry="8" fill="#4a1f10" /><ellipse cx="40" cy="30" rx="6" ry="4" fill="#4a1f10" /></Svg>
          </TaskButton>
          <TaskButton aria-label="Яндекс">
            <Svg w={76} h={50}><path d="M3 1h54l18 40v9H3z" fill="#f1f1f1" /><path d="M44 50V9H32q-11 1-11 11t11 11h12M32 31L20 50" fill="none" stroke="#e5352c" strokeWidth="7" /></Svg>
          </TaskButton>
          <TaskButton $open aria-label="Яндекс Браузер">
            <Svg w={78} h={50}><ellipse cx="39" cy="36" rx="38" ry="35" fill="#f4f4f6" /><path d="M16 14L39 34 62 14M39 33v17" stroke="#b01318" strokeWidth="8" fill="none" /></Svg>
          </TaskButton>
          <TaskButton $open $light aria-label="Paint">
            <Svg w={72} h={50}><ellipse cx="34" cy="32" rx="33" ry="26" fill="#c5dff0" stroke="#7fa9c9" strokeWidth="2" /><circle cx="34" cy="18" r="7" fill="#e8b42c" /><circle cx="18" cy="24" r="6" fill="#5bab3d" /><path d="M48 34L60 2l9 3-12 30z" fill="#c8813f" /></Svg>
          </TaskButton>
          <TaskButton $open $light aria-label="Microsoft Word">
            <Svg w={76} h={50}><path d="M22 1h42v10H40v39H4V20Q4 4 22 1z" fill="#a9bfe6" stroke="#3f68ad" strokeWidth="2" /><path d="M26 10h48v40H26z" fill="#fff" stroke="#5d7ebb" /><path d="M30 14l6 14 5-12 5 12 5-14" stroke="#2b559c" strokeWidth="4" fill="none" /><path d="M56 16h14M56 21h14M56 26h14" stroke="#5d7ebb" strokeWidth="2.500" /></Svg>
          </TaskButton>
        </Launcher>
        <Tray>
          <Lang>RU</Lang>
          <Svg w={34} h={20}><path d="M1 12Q8 1 26 5l7 10M8 12q8-10 18 2" fill="none" stroke="#d9d9d9" strokeWidth="2" /><circle cx="18" cy="14" r="6" fill="#333" stroke="#eee" strokeWidth="2" /></Svg>
          <Svg w={30} h={20}><path d="M0 3l12 3L27 0l3 4-4 5 2 11H6l1-8z" fill="#f77a12" /><path d="M12 12q3-4 6 0v8" stroke="#fff" fill="none" strokeWidth="2" /></Svg>
          <Svg w={38} h={20}><rect width="38" height="30" rx="2" fill="#ec7d23" /><path d="M18 6v8M16 12l8-4v12" stroke="#fff" strokeWidth="2" fill="none" /></Svg>
          <Svg w={38} h={20}><rect x="1" y="1" width="36" height="30" rx="3" fill="#2c3426" stroke="#8a8f88" strokeWidth="2" /><path d="M14 8h20v12H14z" fill="#76b82a" /><circle cx="20" cy="14" r="4" fill="#2c3426" /></Svg>
          <Svg w={28} h={20}><path d="M2 2h18l8 10-6 8H4z" fill="#e9f2fb" /><circle cx="14" cy="11" r="6" fill="#e9913c" /><circle cx="14" cy="11" r="3" fill="#3a84d0" /></Svg>
          <Svg w={38} h={20}><rect width="38" height="30" fill="#3787d2" /><ellipse cx="19" cy="16" rx="14" ry="11" fill="none" stroke="#fff" strokeWidth="2" /><ellipse cx="19" cy="16" rx="7" ry="6" fill="none" stroke="#fff" strokeWidth="2" /></Svg>
          <Svg w={30} h={20}><path d="M0 10Q2 0 14 1v16z" fill="#cf3d2e" /><path d="M14 1q14-1 16 10l-12 7z" fill="#4377b8" /><path d="M12 4h5v16h-5z" fill="#b9c6d2" /></Svg>
          <Svg w={24} h={20}><path d="M0 14l12-8v14H0z" fill="#1f3470" /><circle cx="14" cy="9" r="7" fill="#dfe4ea" /><path d="M11 6h6v14h-6z" fill="#69727e" /></Svg>
          <Svg w={20} h={20}><path d="M0 0h20v20H0z" fill="#7ab800" /></Svg>
          <Svg w={32} h={20}><path d="M1 0v20M2 3h16l3 4h11v13H2z" fill="#fff" stroke="#fff" strokeWidth="2" /></Svg>
          <Svg w={34} h={20}><path d="M8 5h25v14H8z" fill="#2b3a50" stroke="#fff" strokeWidth="2" /><path d="M1 1h7v13H1z" fill="#fff" /></Svg>
          <Svg w={34} h={20}><path d="M0 10h6L16 1v19H0z" fill="#fff" /><path d="M22 9q4 5 0 11M28 7q6 6 2 13" stroke="#b9c3cf" strokeWidth="2" fill="none" /></Svg>
          <Clock>20:27</Clock>
        </Tray>
      </Taskbar>
    </Shell>
  );
}
